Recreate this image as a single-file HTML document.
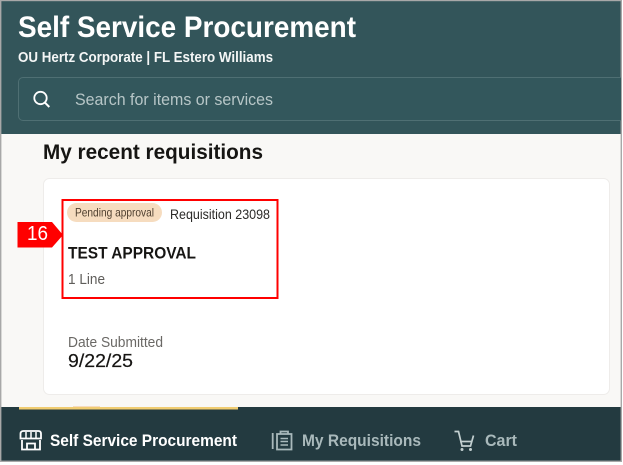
<!DOCTYPE html>
<html><head><meta charset="utf-8"><style>
html,body{margin:0;padding:0;background:#fff;width:623px;height:465px;overflow:hidden}
svg{display:block;position:absolute;left:0;top:0}
text{font-family:"Liberation Sans",sans-serif}
</style></head><body>
<svg width="623" height="465" viewBox="0 0 623 465" xmlns="http://www.w3.org/2000/svg">
<rect width="623" height="465" fill="#fff"/>
<rect x="1" y="1" width="620" height="133" fill="#33555a"/>
<rect x="1" y="134" width="620" height="273" fill="#f9f8f6"/>
<rect x="1" y="407" width="620" height="54" fill="#233a40"/>
<rect x="73" y="406" width="27" height="1" fill="#f7dcc0"/>
<rect x="19" y="407" width="219" height="2.500" fill="#f0cc71"/>
<rect x="0.700" y="0.500" width="620.600" height="460.800" fill="none" stroke="#a8a8a8" stroke-width="1.400"/>
<text x="18" y="37" font-size="29.500" font-weight="700" fill="#fff" textLength="338" lengthAdjust="spacingAndGlyphs">Self Service Procurement</text>
<text x="18" y="62" font-size="14.500" font-weight="700" fill="#f4f6f6" textLength="255" lengthAdjust="spacingAndGlyphs">OU Hertz Corporate | FL Estero Williams</text>
<path d="M621 77.500H23a4.500 4.500 0 0 0-4.500 4.500v34a4.500 4.500 0 0 0 4.500 4.500H621" fill="#33575c" stroke="#4f6f73"/>
<circle cx="40.500" cy="98" r="6.200" fill="none" stroke="#fff" stroke-width="1.800"/>
<path d="M45 102.700L49.300 107" stroke="#fff" stroke-width="2" fill="none"/>
<text x="75" y="105" font-size="17" fill="#b7c6c7" textLength="198" lengthAdjust="spacingAndGlyphs">Search for items or services</text>
<text x="43" y="159" font-size="21.500" font-weight="700" fill="#161513" textLength="220" lengthAdjust="spacingAndGlyphs">My recent requisitions</text>
<rect x="43.500" y="178.500" width="566" height="216" rx="6" fill="#fff" stroke="#eeecea"/>
<rect x="67" y="203" width="95" height="19" rx="9.500" fill="#f6dcbf"/>
<text x="75" y="216.500" font-size="12" fill="#4e3f2f" textLength="79" lengthAdjust="spacingAndGlyphs">Pending approval</text>
<text x="170" y="219" font-size="14" fill="#2b2a28" textLength="100" lengthAdjust="spacingAndGlyphs">Requisition 23098</text>
<rect x="62.500" y="200" width="215" height="98" fill="none" stroke="#f00" stroke-width="2"/>
<path d="M17.500 222H52L63 235L52 247.500H17.500Z" fill="#f00"/>
<text x="27" y="240" font-size="20" fill="#fff" textLength="21" lengthAdjust="spacingAndGlyphs">16</text>
<text x="68" y="258.500" font-size="17" font-weight="700" fill="#161513" textLength="128" lengthAdjust="spacingAndGlyphs">TEST APPROVAL</text>
<text x="68" y="284" font-size="14.500" fill="#5f5d5a" textLength="37" lengthAdjust="spacingAndGlyphs">1 Line</text>
<text x="68" y="347" font-size="14.500" fill="#6a6865" textLength="95" lengthAdjust="spacingAndGlyphs">Date Submitted</text>
<text x="68" y="367" font-size="18" fill="#161513" stroke="#161513" stroke-width="0.200" textLength="65" lengthAdjust="spacingAndGlyphs">9/22/25</text>
<g fill="none" stroke="#fff" stroke-width="1.800">
<path d="M23.500 431H38.500Q41 431 41 434V438.500H20.500V434Q20.500 431 23.500 431Z"/>
<path d="M22 440V449.500H40V440"/>
<path d="M27 449.500V443.500H35V449.500"/>
<path d="M26 432V438M31 432V438M36 432V438" stroke-width="1.500"/>
</g>
<text x="50" y="446" font-size="17" font-weight="700" fill="#fff" textLength="187" lengthAdjust="spacingAndGlyphs">Self Service Procurement</text>
<g fill="none" stroke="#a9b9bb" stroke-width="1.800">
<path d="M272.700 433V449"/>
<path d="M277 434H291.500V449.500H277Z"/>
<path d="M280.500 434V431.500H288V434"/>
<path d="M280.500 438.500H288M280.500 441.500H288M280.500 445H288" stroke-width="1.500"/>
</g>
<text x="302" y="446" font-size="17" font-weight="700" fill="#a9b9bb" textLength="119" lengthAdjust="spacingAndGlyphs">My Requisitions</text>
<g fill="none" stroke="#c3d0d1" stroke-width="1.700">
<path d="M454.500 431.500H458.500L462 446H470.500L473.500 435.500"/>
<path d="M460 441.500H472"/>
</g>
<circle cx="462" cy="449.500" r="1.500" fill="#c3d0d1"/>
<circle cx="470.500" cy="449.500" r="1.500" fill="#c3d0d1"/>
<text x="485" y="446" font-size="17" font-weight="700" fill="#a9b9bb" textLength="32" lengthAdjust="spacingAndGlyphs">Cart</text>
</svg>
</body></html>
